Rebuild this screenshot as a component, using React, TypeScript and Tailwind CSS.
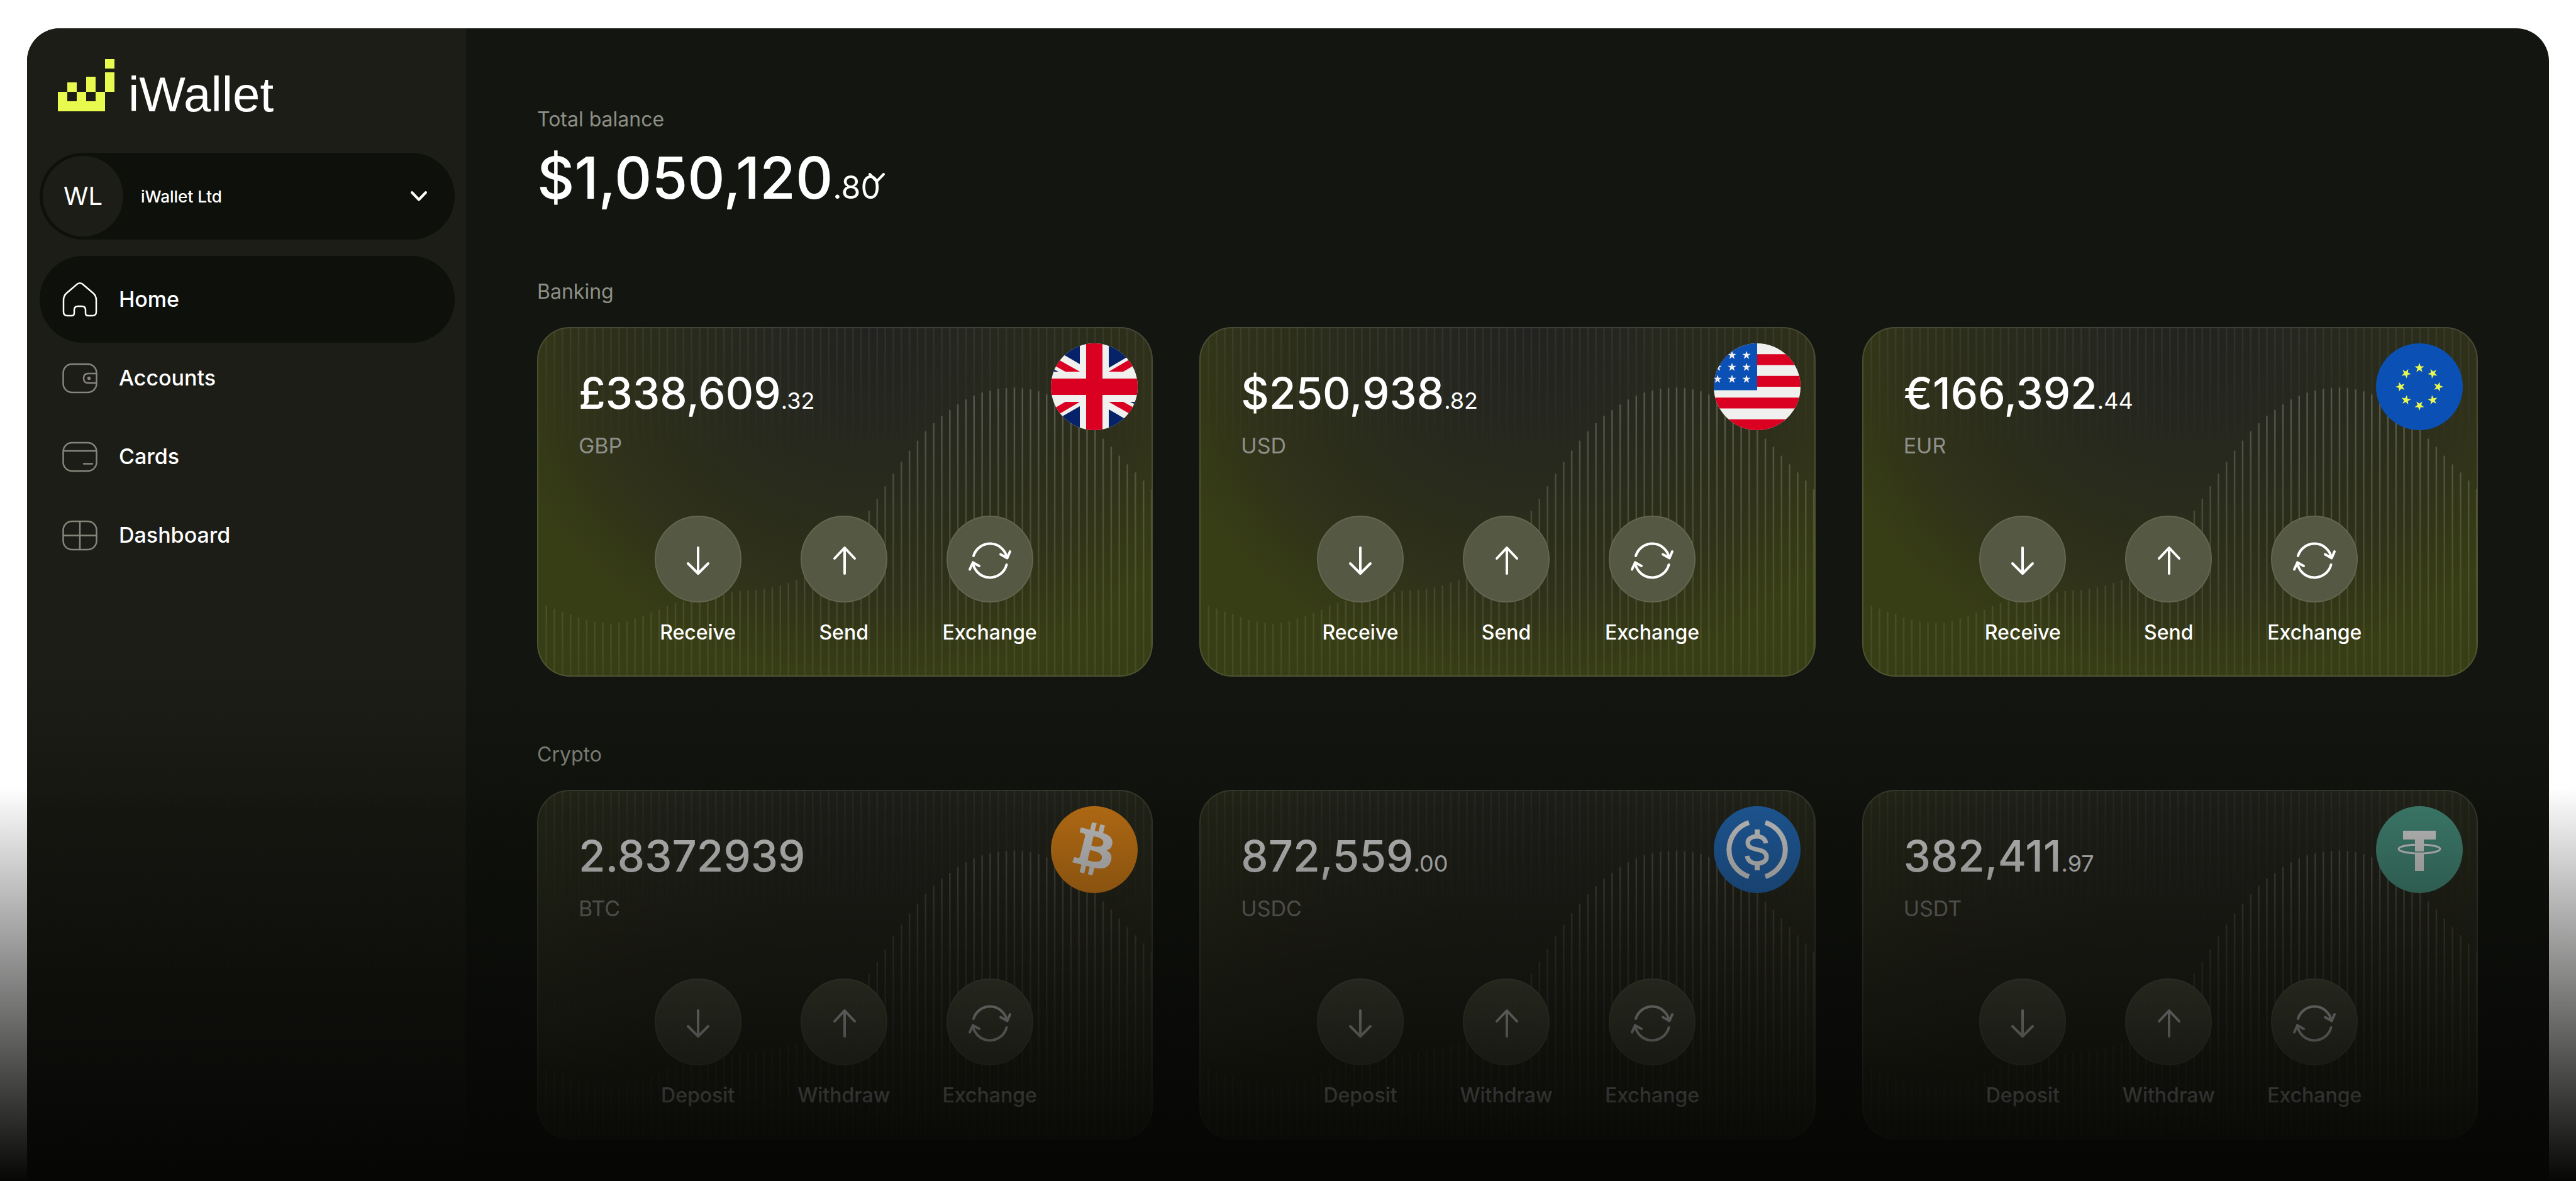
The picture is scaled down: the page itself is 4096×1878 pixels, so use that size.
import React from 'react';
import { FaBitcoin } from 'react-icons/fa';

interface Account {
    code: string;
    amount: string;
    cents?: string;
    badge: React.ReactNode;
}

interface NavItem {
    label: string;
    icon: React.ReactNode;
    active?: boolean;
}

interface Action {
    label: string;
    icon: React.ReactNode;
}

// --- Card wave: top of every bar, left to right ---
const WAVE = [
    445, 449, 454, 458, 463, 467, 470, 472, 473, 472, 469, 465, 461, 456, 451, 445, 440, 437, 434,
    432, 429, 427, 425, 423, 421, 420, 419, 417, 415, 412, 408, 403, 397, 390, 380, 370, 357, 343,
    328, 310, 292, 273, 253, 233, 214, 196, 180, 165, 152, 140, 131, 122, 114, 108, 103, 100, 97,
    96, 95, 96, 98, 101, 106, 113, 120, 129, 139, 150, 163, 177, 190, 204, 218, 231, 244, 258,
];

const starPoints = (cx: number, cy: number, r: number, turn = 0) =>
    Array.from({ length: 10 }, (_, i) => {
        const radius = i % 2 === 0 ? r : r * 0.4;
        const a = ((i * 36 + turn - 90) * Math.PI) / 180;
        return `${(cx + radius * Math.cos(a)).toFixed(2)},${(cy + radius * Math.sin(a)).toFixed(2)}`;
    }).join(' ');

// --- Badges ---
const Badge: React.FC<{ children: React.ReactNode; className?: string }> = ({ children, className = '' }) => (
    <svg viewBox="0 0 138 138" className={`size-full ${className}`} aria-hidden="true">
        {children}
    </svg>
);

const FlagGB = () => (
    <Badge className="bg-[#f0f0ee]">
        <g fill="#062268">
            <polygon points="46,0 46,33 -11,0" />
            <polygon points="92,0 92,39 158,0" />
            <polygon points="46,100 46,138 -20,138" />
            <polygon points="92,105 92,138 149,138" />
            <polygon points="0,39 12,45 0,45" />
            <polygon points="126,93 138,93 138,99" />
        </g>
        <g fill="#d90022">
            <polygon points="14,27 46,45 23,45 5,35" />
            <polygon points="92,45 126,25 134,34 115,45" />
            <polygon points="46,93 23,93 4,104 12,113" />
            <polygon points="92,93 115,93 135,104 127,113" />
            <rect x="56" width="26" height="138" />
            <rect y="56" width="138" height="26" />
        </g>
    </Badge>
);

const FlagUS = () => (
    <Badge className="bg-[#f0f0ee]">
        {[1, 3, 5, 7].map(i => (
            <rect key={i} y={i * 17.25} width="138" height="17.25" fill="#d90022" />
        ))}
        <rect width="69" height="74.5" fill="#0b51b5" />
        {[19, 38, 57].map(y =>
            [6, 29, 52].map(x => <polygon key={`${x}-${y}`} points={starPoints(x, y, 7)} fill="#f0f0ee" />)
        )}
    </Badge>
);

const FlagEU = () => (
    <Badge className="bg-[#0b51b5]">
        {[0, 45, 90, 135, 180, 225, 270, 315].map(deg => {
            const a = ((deg - 90) * Math.PI) / 180;
            return (
                <polygon
                    key={deg}
                    points={starPoints(69 + 30 * Math.cos(a), 69 + 30 * Math.sin(a), 8, deg)}
                    fill="#e9fa4e"
                />
            );
        })}
    </Badge>
);

const CoinBTC = () => (
    <FaBitcoin
        className="size-full bg-[radial-gradient(circle_closest-side,#fff_85%,#f7931a_85%)] text-[#f7931a]"
        aria-hidden="true"
    />
);

const CoinUSDC = () => (
    <Badge className="bg-[#2775ca]">
        <g fill="none" stroke="#fff" strokeWidth="8">
            <path d="M56 26A45 45 0 0 0 56 112" />
            <path d="M82 26A45 45 0 0 1 82 112" />
            <path d="M69 37V49M69 90V102" />
            <path
                strokeWidth="7"
                d="M83 59C82 52 76 48 69 48C60 48 54 52 54 58C54 65 60 67 69 69C79 71 84 74 84 81C84 87 78 91 69 91C60 91 54 87 53 79"
            />
        </g>
    </Badge>
);

const CoinUSDT = () => (
    <Badge className="bg-[#50a48f]">
        <g fill="#fff">
            <rect x="43" y="39" width="52" height="14" />
            <rect x="62" y="52" width="14" height="20" />
            <rect x="62" y="75" width="14" height="28" />
        </g>
        <ellipse cx="69" cy="68" rx="33" ry="7" fill="none" stroke="#fff" strokeWidth="3" />
    </Badge>
);

// --- Icons ---
const Chevron = ({ className = '' }: { className?: string }) => (
    <svg viewBox="0 0 28 18" className={`h-[18px] w-7 ${className}`} fill="none" stroke="currentColor" strokeWidth="4" strokeLinecap="round" strokeLinejoin="round" aria-hidden="true">
        <path d="M3 3L14 14.5L25 3" />
    </svg>
);

const NavIcon: React.FC<{ children: React.ReactNode }> = ({ children }) => (
    <svg viewBox="0 0 56 56" className="size-14 shrink-0" fill="none" stroke="currentColor" strokeWidth="2.5" strokeLinecap="round" aria-hidden="true">
        {children}
    </svg>
);

const ActionIcon: React.FC<{ children: React.ReactNode }> = ({ children }) => (
    <svg viewBox="33 33 72 72" className="size-[72px]" fill="none" stroke="currentColor" strokeWidth="4" strokeLinecap="round" strokeLinejoin="round" aria-hidden="true">
        {children}
    </svg>
);

const arrowDown = (
    <ActionIcon>
        <path d="M69 51V91M53 76L69 92L85 76" />
    </ActionIcon>
);

const arrowUp = (
    <ActionIcon>
        <path d="M70 92V52M54 68L70 51L86 68" />
    </ActionIcon>
);

const exchange = (
    <ActionIcon>
        <path d="M43 64A27.3 27.3 0 0 1 96 67" />
        <path d="M86 61.5L96.5 67.5L101 57" />
        <path d="M95.5 78A27.3 27.3 0 0 1 42 74.5" />
        <path d="M37 85.5L42 74.5L52 80" />
    </ActionIcon>
);

const NAV: NavItem[] = [
    {
        label: 'Home',
        active: true,
        icon: (
            <NavIcon>
                <path d="M24 3.5Q28 .8 32 3.5L49 18Q54 22.5 54 29V48Q54 54 48 54H41Q37 54 37 50V45Q37 39 31 39H25Q19 39 19 45V50Q19 54 15 54H8Q2 54 2 48V29Q2 22.5 7 18Z" />
            </NavIcon>
        ),
    },
    {
        label: 'Accounts',
        icon: (
            <NavIcon>
                <rect x="1.5" y="6" width="53" height="45" rx="14" />
                <path d="M54 21H41Q34 21 34 28.5T41 36H54" />
                <circle cx="42.5" cy="28.5" r="1.5" fill="currentColor" />
            </NavIcon>
        ),
    },
    {
        label: 'Cards',
        icon: (
            <NavIcon>
                <rect x="1.5" y="6" width="53" height="45" rx="14" />
                <path d="M3 19H53M34 39.5H48" />
            </NavIcon>
        ),
    },
    {
        label: 'Dashboard',
        icon: (
            <NavIcon>
                <rect x="1.5" y="6" width="53" height="45" rx="14" />
                <path d="M28 6V51M2 28.5H54" />
            </NavIcon>
        ),
    },
];

const BANKING: Account[] = [
    { code: 'GBP', amount: '£338,609', cents: '.32', badge: <FlagGB /> },
    { code: 'USD', amount: '$250,938', cents: '.82', badge: <FlagUS /> },
    { code: 'EUR', amount: '€166,392', cents: '.44', badge: <FlagEU /> },
];

const CRYPTO: Account[] = [
    { code: 'BTC', amount: '2.8372939', badge: <CoinBTC /> },
    { code: 'USDC', amount: '872,559', cents: '.00', badge: <CoinUSDC /> },
    { code: 'USDT', amount: '382,411', cents: '.97', badge: <CoinUSDT /> },
];

const BANKING_ACTIONS: Action[] = [
    { label: 'Receive', icon: arrowDown },
    { label: 'Send', icon: arrowUp },
    { label: 'Exchange', icon: exchange },
];

const CRYPTO_ACTIONS: Action[] = [
    { label: 'Deposit', icon: arrowDown },
    { label: 'Withdraw', icon: arrowUp },
    { label: 'Exchange', icon: exchange },
];

const OLIVE = 'bg-[radial-gradient(ellipse_62%_98%_at_54%_2%,#222220_0%,#282a1d_45%,#2f311a_75%,#373d15_100%)]';
const OLIVE_MUTED = 'bg-[radial-gradient(ellipse_66%_110%_at_54%_2%,#242420_0%,#28291f_45%,#2c2d1d_75%,#313420_100%)]';

const CardWave = () => (
    <svg viewBox="0 0 979 556" preserveAspectRatio="none" className="absolute inset-0 size-full" aria-hidden="true">
        <defs>
            <linearGradient id="wave" gradientUnits="userSpaceOnUse" x1="0" y1="95" x2="0" y2="556">
                <stop offset="0" stopColor="#fff" stopOpacity=".22" />
                <stop offset=".6" stopColor="#e8f0b0" stopOpacity=".13" />
                <stop offset="1" stopColor="#e8f0b0" stopOpacity=".07" />
            </linearGradient>
            <linearGradient id="rain" gradientUnits="userSpaceOnUse" x1="0" y1="0" x2="0" y2="200">
                <stop offset="0" stopColor="#fff" stopOpacity=".06" />
                <stop offset="1" stopColor="#fff" stopOpacity="0" />
            </linearGradient>
        </defs>
        {WAVE.map((top, i) => (
            <g key={i}>
                <rect x={11.5 + i * 12.88} y={top} width="2.5" height={556 - top} fill="url(#wave)" />
                <rect x={11.5 + i * 12.88} y="0" width="2.5" height={Math.min(top, 200)} fill="url(#rain)" />
            </g>
        ))}
    </svg>
);

const AccountCard: React.FC<{ account: Account; actions: Action[]; surface: string }> = ({ account, actions, surface }) => (
    <article className={`relative overflow-hidden rounded-[52px] border-2 border-white/12 bg-origin-border pt-[59px] pr-[68px] pb-12 pl-16 ${surface}`}>
        <CardWave />
        <div className="absolute top-6 right-[22px] size-[138px] overflow-hidden rounded-full">{account.badge}</div>
        <div className="relative">
            <p className="text-[69px] leading-[88px] font-medium text-white">
                {account.amount}
                {account.cents && <span className="text-[36px] leading-none font-normal">{account.cents}</span>}
            </p>
            <p className="mt-5 text-[34px] leading-10 text-[#8f908a]">{account.code}</p>
            <div className="mt-[91px] flex justify-center">
                {actions.map(action => (
                    <button key={action.label} type="button" className="flex w-[232px] flex-col items-center gap-7 text-white">
                        <span className="flex size-[138px] items-center justify-center rounded-full border-2 border-[#64664f] bg-[#555842]">
                            {action.icon}
                        </span>
                        <span className="text-[32px] leading-10 font-medium">{action.label}</span>
                    </button>
                ))}
            </div>
        </div>
    </article>
);

interface AccountSectionProps {
    title: string;
    accounts: Account[];
    actions: Action[];
    surface: string;
}

const AccountSection: React.FC<AccountSectionProps> = ({ title, accounts, actions, surface }) => (
    <section className="mt-[104px]">
        <h2 className="text-[32px] leading-10 text-[#8e8f86]">{title}</h2>
        <div className="mt-9 grid grid-cols-3 gap-[74px]">
            {accounts.map(account => (
                <AccountCard key={account.code} account={account} actions={actions} surface={surface} />
            ))}
        </div>
    </section>
);

const Sidebar = () => (
    <aside className="w-[698px] shrink-0 bg-[#1c1d16] pt-[49px] pr-[18px] pl-5">
        <div className="flex items-baseline gap-[22px] pl-[29px]">
            <svg viewBox="0 0 90 83" className="h-[83px] w-[90px]" fill="#e9fa4e" aria-hidden="true">
                <path d="M0 52H15V67H30V52H45V67H60V52H75V83H0Z" />
                <path d="M15 37H30V52H15ZM45 28H60V52H45ZM75 21H90V52H75ZM75 0H90V15H75Z" />
            </svg>
            <span className="font-['Liberation_Sans',sans-serif] text-[78px] leading-[80px] text-white">iWallet</span>
        </div>

        <div className="mt-[53px] flex h-[138px] items-center rounded-full bg-[#0e100b] pr-[43px] pl-[5px] text-white">
            <span className="flex size-32 shrink-0 items-center justify-center rounded-full bg-[#1c1d16] text-[40px]">WL</span>
            <select aria-label="Company" className="ml-7 min-w-0 flex-1 appearance-none bg-transparent text-[26px] font-medium outline-none">
                <option>iWallet Ltd</option>
            </select>
            <Chevron />
        </div>

        <nav className="mt-[26px] flex flex-col -space-y-[13px]">
            {NAV.map(item => (
                <a
                    key={item.label}
                    href="#"
                    className={`flex h-[138px] items-center gap-[34px] rounded-full pl-9 ${item.active ? 'bg-[#0e100b] text-white' : 'text-[#85857a]'}`}
                >
                    {item.icon}
                    <span className="text-[34px] leading-10 font-medium text-white">{item.label}</span>
                </a>
            ))}
        </nav>
    </aside>
);

export default function App() {
    return (
        <div className="relative flex min-h-screen bg-white px-[43px] pt-[45px] font-[Inter,sans-serif]">
            <div className="relative flex flex-1 overflow-hidden rounded-t-[52px] bg-[#131610]">
                <Sidebar />
                <main className="min-w-0 flex-1 px-[113px] pt-[125px] pb-[60px]">
                    <h1 className="text-[32px] leading-10 text-[#8e8f86]">Total balance</h1>
                    <div className="mt-4 flex items-center text-white">
                        <p className="text-[92px] leading-[114px] font-medium">
                            $1,050,120<span className="text-[50px] leading-none font-normal">.80</span>
                        </p>
                        <button type="button" aria-label="Change currency" className="-ml-5">
                            <Chevron />
                        </button>
                    </div>
                    <AccountSection title="Banking" accounts={BANKING} actions={BANKING_ACTIONS} surface={OLIVE} />
                    <AccountSection title="Crypto" accounts={CRYPTO} actions={CRYPTO_ACTIONS} surface={OLIVE_MUTED} />
                </main>
                <div className="pointer-events-none absolute inset-0 bg-[linear-gradient(to_bottom,transparent_56%,rgba(4,5,3,0.27)_68%,rgba(4,5,3,0.2)_100%)]" />
            </div>
            <div className="pointer-events-none absolute inset-x-0 bottom-0 h-1/3 bg-linear-to-b from-transparent to-[#060605]" />
        </div>
    );
}
